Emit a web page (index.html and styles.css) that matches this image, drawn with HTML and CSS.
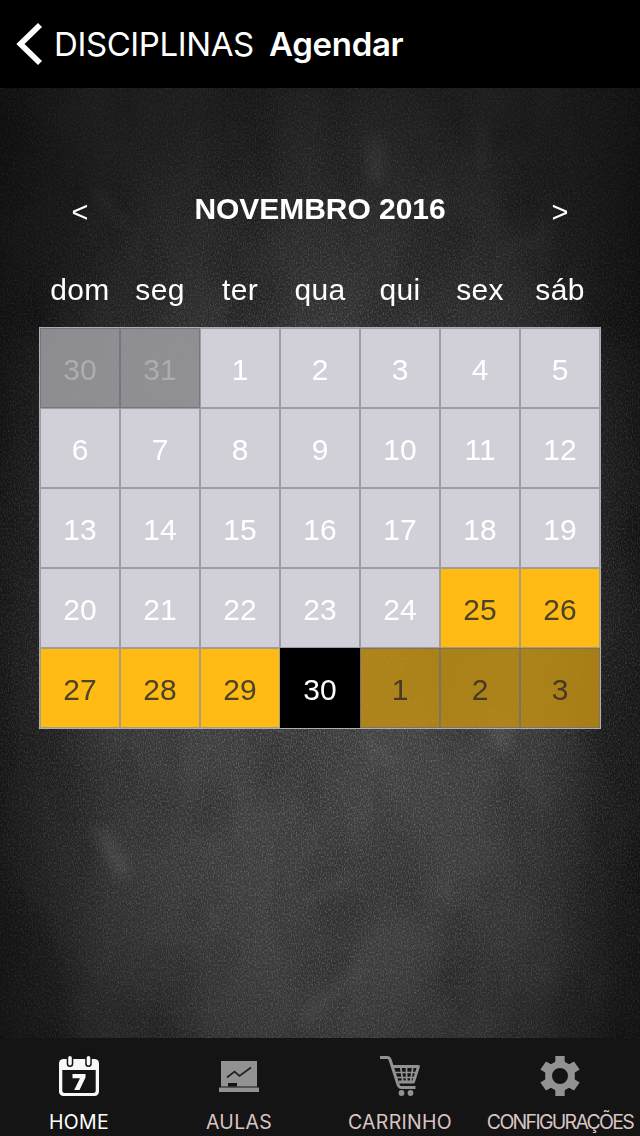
FILE: index.html
```html
<!DOCTYPE html>
<html lang="pt-BR">
<head>
<meta charset="utf-8">
<title>Agendar</title>
<link rel="stylesheet" href="styles.css">
</head>
<body>
<div class="app">
  <header class="navbar">
    <a class="back">
      <svg class="chevron" width="28" height="44" viewBox="0 0 28 44"><path d="M25 3 5.500 22 25 41" fill="none" stroke="#fff" stroke-width="5.8"/></svg>
      <span class="back-label">DISCIPLINAS</span>
    </a>
    <h1 class="title">Agendar</h1>
  </header>

  <main class="board">
    <svg class="chalk" width="640" height="950" viewBox="0 0 640 950" aria-hidden="true">
      <defs>
        <filter id="grain" x="0" y="0" width="100%" height="100%">
          <feTurbulence type="fractalNoise" baseFrequency=".83 .47" numOctaves="2" seed="8"/>
          <feColorMatrix values="0 0 0 0 1  0 0 0 0 1  0 0 0 0 1  1.3 0 0 0 -.55"/>
        </filter>
        <filter id="smoke" x="0" y="0" width="100%" height="100%">
          <feTurbulence type="fractalNoise" baseFrequency=".014 .008" numOctaves="3" seed="4"/>
          <feColorMatrix values="0 0 0 0 0  0 0 0 0 0  0 0 0 0 0  1.2 0 0 0 -.5"/>
        </filter>
        <filter id="soft" x="-50%" y="-50%" width="200%" height="200%"><feGaussianBlur stdDeviation="7"/></filter>
        <radialGradient id="fade" cx=".52" cy=".6" r=".65"><stop offset="0" stop-color="#fff"/><stop offset=".55" stop-color="#bbb"/><stop offset="1" stop-color="#444"/></radialGradient>
        <mask id="center"><rect width="640" height="950" fill="url(#fade)"/></mask>
      </defs>
      <rect width="640" height="950" filter="url(#smoke)" opacity=".45"/>
      <g filter="url(#soft)" stroke="#fff" stroke-linecap="round" fill="none">
        <path d="m101 744 22 40" stroke-width="12" opacity=".12"/>
        <path d="m306 812 43-22M365 650l28 25m48 120 15 22M300 935l60-55" stroke-width="7" opacity=".08"/>
        <path d="M376 55v35" stroke-width="12" opacity=".07"/>
        <path d="m95 103 30 35M482 35v45M545 135v45m-40-18 40-10" stroke-width="5" opacity=".07"/>
        <path d="M500 635v18" stroke-width="20" opacity=".09"/>
      </g>
      <g mask="url(#center)"><rect width="640" height="950" filter="url(#grain)" opacity=".45"/></g>
    </svg>

    <section class="calendar">
      <div class="month">
        <span class="step">&lt;</span>
        <h2 class="month-name">NOVEMBRO 2016</h2>
        <span class="step">&gt;</span>
      </div>
      <div class="weekdays"><span>dom</span><span>seg</span><span>ter</span><span>qua</span><span>qui</span><span>sex</span><span>sáb</span></div>
      <div class="days">
        <span class="day other">30</span><span class="day other">31</span><span class="day">1</span><span class="day">2</span><span class="day">3</span><span class="day">4</span><span class="day">5</span>
        <span class="day">6</span><span class="day">7</span><span class="day">8</span><span class="day">9</span><span class="day">10</span><span class="day">11</span><span class="day">12</span>
        <span class="day">13</span><span class="day">14</span><span class="day">15</span><span class="day">16</span><span class="day">17</span><span class="day">18</span><span class="day">19</span>
        <span class="day">20</span><span class="day">21</span><span class="day">22</span><span class="day">23</span><span class="day">24</span><span class="day open">25</span><span class="day open">26</span>
        <span class="day open">27</span><span class="day open">28</span><span class="day open">29</span><span class="day selected">30</span><span class="day open-next">1</span><span class="day open-next">2</span><span class="day open-next">3</span>
      </div>
    </section>
  </main>

  <nav class="tabs">
    <a class="tab active">
      <svg width="42" height="42" viewBox="0 0 42 42"><rect x="1" y="4" width="40" height="37" rx="4.5" fill="#f8f8fa"/><path d="M4.300 15h33.400v20.500a2.500 2.500 0 0 1-2.500 2.500H6.800a2.500 2.500 0 0 1-2.500-2.500z" fill="#141414"/><path d="M12 2.800v6m18.500-6v6" stroke="#141414" stroke-width="6.600" stroke-linecap="round"/><path d="M12 2.800v6m18.500-6v6" stroke="#f8f8fa" stroke-width="3.600" stroke-linecap="round"/><path d="M14.500 19H27.500v3.500L21.500 35h-5.300l5.800-11.700h-7.500z" fill="#f8f8fa"/></svg>
      <span class="tab-label">HOME</span>
    </a>
    <a class="tab">
      <svg width="42" height="42" viewBox="0 0 42 42"><path d="M3 6h36v25.500H3zM1 32.500h40V37H1z" fill="#929292"/><path d="M10 28h9v3.500h-9z" fill="#141414"/><path d="m9 22.500 7.500-6 5 4.500L33 12.500" fill="none" stroke="#202020" stroke-width="1.700"/></svg>
      <span class="tab-label">AULAS</span>
    </a>
    <a class="tab">
      <svg width="42" height="42" viewBox="0 0 42 42"><g fill="none" stroke="#929292"><path d="M1 2.500h7.500c1.500 0 2 .7 2.500 2l8 25c.5 2 1.500 3 3.500 3h14" stroke-width="3"/><path d="M14 11.500h25.500L34.500 27H20" stroke-width="2.800" stroke-linejoin="round"/><path d="M16 17.500h22M17.500 22.500h19M21.500 11l2.500 16M27.500 11l.2 16M34 11l-2.500 16" stroke-width="1.700"/></g><circle cx="22.500" cy="38" r="2.900" fill="#929292"/><circle cx="31.500" cy="38" r="2.900" fill="#929292"/></svg>
      <span class="tab-label">CARRINHO</span>
    </a>
    <a class="tab">
      <svg width="42" height="42" viewBox="0 0 42 42"><path fill="#929292" fill-rule="evenodd" d="M16.300 1h9.400v5.800l4.300 2.500 5-2.900 5.700 8.200-4.900 3v6.800l4.900 3-5.700 8.200-5-2.900-4.300 2.500V41h-9.400v-5.800L12 32.700l-5 2.900-5.700-8.200 4.900-3v-6.800l-4.900-3L7 6.400l5 2.900 4.300-2.500zM21 13a8 8 0 1 0 0 16 8 8 0 0 0 0-16z"/></svg>
      <span class="tab-label config">CONFIGURAÇÕES</span>
    </a>
  </nav>
</div>
</body>
</html>
```
FILE: styles.css
```css
* { box-sizing: border-box; }
body { margin: 0; background: #000; }
.app { width: 640px; height: 1136px; display: flex; flex-direction: column; overflow: hidden; font-family: "Liberation Sans", Arial, sans-serif; color: #fff; }
.navbar { flex: 0 0 88px; display: flex; align-items: center; background: #000; padding-left: 15px; font-family: Inter, sans-serif; }
.back { display: flex; align-items: center; width: 254px; white-space: nowrap; }
.chevron { flex: none; }
.back-label { margin-left: 11px; font-size: 33px; font-weight: 400; line-height: 40px; letter-spacing: -0.4px; }
.title { margin: 0; font-size: 33px; font-weight: 600; line-height: 40px; letter-spacing: -0.3px; }
.board { flex: 0 0 950px; position: relative; overflow: hidden; background:
  linear-gradient(90deg, rgba(0,0,0,.35), transparent 17%, transparent 84%, rgba(0,0,0,.4)),
  radial-gradient(ellipse 390px 620px at 52% 64%, #434343, #3b3b3b 45%, #262626 82%, #1c1c1c); }
.chalk { position: absolute; inset: 0; }
.calendar { position: relative; padding: 99px 39px 0; }
.month { display: grid; grid-template-columns: 82px 398px 82px; height: 44px; text-align: center; }
.month-name { margin: 0; font-size: 30px; line-height: 44px; font-weight: 700; white-space: nowrap; letter-spacing: -.05px; }
.step { font-size: 29px; line-height: 50px; }
.weekdays { display: grid; grid-template-columns: repeat(7, 80px); padding-left: 1px; margin-top: 39px; height: 57px; font-size: 30px; line-height: 40px; text-align: center; letter-spacing: .3px; }
.days { display: grid; grid-template-columns: repeat(7, 80px); grid-auto-rows: 80px; width: 562px; border: 1px solid #aeacb5; }
.day { display: flex; align-items: center; justify-content: center; padding-top: 4px; border: 1px solid #9f9da9; background: #d1d0d8; font-size: 30px; line-height: 36px; color: #fff; }
.other { background: rgba(157,156,161,.88); border-color: #77767d; color: #adacb1; }
.open { background: #ffba14; border-color: #a99d7d; color: #4b442b; }
.open-next { background: rgba(193,143,19,.84); border-color: #7f7459; color: #463b22; }
.selected { background: #000; border-color: #000; }
.tabs { flex: 0 0 98px; display: grid; grid-template-columns: repeat(4, 160px); background: #141414; font-family: Inter, sans-serif; }
.tab { display: flex; flex-direction: column; align-items: center; padding-top: 17px; padding-right: 2px; }
.tab:nth-child(n+3) { padding-right: 0; }
.tab svg { flex: none; }
.tab-label { margin-top: 13px; font-size: 19.500px; font-weight: 400; line-height: 24px; white-space: nowrap; color: #d9c5c3; letter-spacing: .3px; }
.active .tab-label { color: #fff; }
.tab-label.config { letter-spacing: -1.7px; }
```
